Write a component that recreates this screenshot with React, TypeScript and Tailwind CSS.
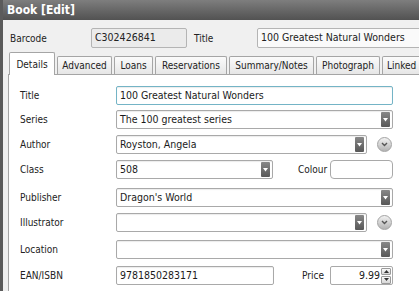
import type { ReactNode } from "react"

const FONT = "font-['DejaVu_Sans_Condensed','DejaVu_Sans',sans-serif]"

function DropBtn() {
  return (
    <div className="ml-auto mr-[2px] flex h-[15px] w-[9px] shrink-0 items-center justify-center rounded-[1px] bg-gradient-to-b from-[#888] to-[#585858]">
      <svg width="5" height="5" viewBox="0 0 5 5">
        <path d="M0 1h5L2.5 4.5z" fill="#fff" />
      </svg>
    </div>
  )
}

function RoundBtn() {
  return (
    <div className="ml-[10px] flex h-[15px] w-[15px] items-center justify-center rounded-full border border-[#a3a3a3] bg-gradient-to-b from-[#f2f2f2] to-[#b3b3b3]">
      <svg width="7" height="5" viewBox="0 0 7 5">
        <path d="M1 1l2.5 2.5L6 1" stroke="#555" strokeWidth="1.4" fill="none" />
      </svg>
    </div>
  )
}

function Box({ w, value, drop, focus }: { w: string; value?: string; drop?: boolean; focus?: boolean }) {
  return (
    <div
      className={`flex h-[19px] items-center rounded-[2px] border bg-white pl-[3px] text-[#1b1b1b] shadow-[inset_0_1px_1px_rgba(0,0,0,0.08)] ${w} ${
        focus ? "border-[#74b4c6]" : "border-[#a9a9a9]"
      }`}
    >
      <span className="whitespace-nowrap text-[10.5px]">{value}</span>
      {drop && <DropBtn />}
    </div>
  )
}

function Row({ label, mt, children }: { label: string; mt: string; children: ReactNode }) {
  return (
    <div className={`flex h-[19px] items-center ${mt}`}>
      <div className="w-[96px] shrink-0 text-[#222]">{label}</div>
      {children}
    </div>
  )
}

const tabs = [
  { name: "Advanced", w: "w-[55px]" },
  { name: "Loans", w: "w-[39px]" },
  { name: "Reservations", w: "w-[72px]" },
  { name: "Summary/Notes", w: "w-[85px]" },
  { name: "Photograph", w: "w-[64px]" },
]

export default function App() {
  return (
    <div className={`${FONT} flex h-[291px] w-[419px] flex-col overflow-hidden border-l-[3px] border-[#5b5b5b] bg-[#f0f0f0] text-[10px]`}>
      {/* title bar */}
      <div className="flex h-[20px] shrink-0 items-center bg-gradient-to-b from-[#7e7e7e] to-[#525252] pl-[4px] text-[12px] font-bold text-white">
        Book [Edit]
      </div>

      {/* barcode / title */}
      <div className="mt-[8px] flex h-[20px] shrink-0 items-center">
        <div className="w-[88px] shrink-0 pl-[7px] text-[#222]">Barcode</div>
        <div className="flex h-[20px] w-[96px] shrink-0 items-center rounded-[2px] border border-[#b4b4b4] bg-[#ebebeb] pl-[3px] text-[10.5px] text-[#222]">
          C302426841
        </div>
        <div className="ml-[7px] w-[63px] shrink-0 text-[#222]">Title</div>
        <div className="flex h-[20px] w-[200px] shrink-0 items-center rounded-[2px] border border-[#b4b4b4] bg-[#fafafa] pl-[3px] text-[10.5px] text-[#222]">
          100 Greatest Natural Wonders
        </div>
      </div>

      {/* tabs */}
      <div className="relative z-10 mt-[4px] flex shrink-0 items-end gap-[2px] pl-[6px]">
        <div className="-mb-px flex h-[23px] w-[46px] shrink-0 items-center justify-center rounded-t-[2px] border border-b-0 border-[#a5a5a5] bg-white text-[#222]">
          Details
        </div>
        {tabs.map((t) => (
          <div
            key={t.name}
            className={`flex h-[18px] shrink-0 items-center justify-center rounded-t-[2px] border border-b-0 border-[#a5a5a5] bg-gradient-to-b from-[#fbfbfb] to-[#e6e6e6] text-[#222] ${t.w}`}
          >
            {t.name}
          </div>
        ))}
        <div className="flex h-[18px] w-[50px] shrink-0 items-center rounded-t-[2px] border border-b-0 border-[#a5a5a5] bg-gradient-to-b from-[#fbfbfb] to-[#e6e6e6] pl-[4px] text-[#222]">
          Linked
        </div>
      </div>

      {/* details panel */}
      <div className="ml-[5px] flex-1 border-l border-t border-[#a5a5a5] bg-white pl-[11px]">
        <Row label="Title" mt="mt-[11px]">
          <Box w="w-[277px]" value="100 Greatest Natural Wonders" focus />
        </Row>
        <Row label="Series" mt="mt-[5px]">
          <Box w="w-[277px]" value="The 100 greatest series" drop />
        </Row>
        <Row label="Author" mt="mt-[6px]">
          <Box w="w-[251px]" value="Royston, Angela" drop />
          <RoundBtn />
        </Row>
        <Row label="Class" mt="mt-[6px]">
          <Box w="w-[157px]" value="508" drop />
          <div className="ml-[25px] w-[32px] text-[#222]">Colour</div>
          <div className="h-[19px] w-[63px] rounded-[4px] border border-[#a9a9a9] bg-white" />
        </Row>
        <Row label="Publisher" mt="mt-[9px]">
          <Box w="w-[277px]" value="Dragon's World" drop />
        </Row>
        <Row label="Illustrator" mt="mt-[6px]">
          <Box w="w-[251px]" drop />
          <RoundBtn />
        </Row>
        <Row label="Location" mt="mt-[8px]">
          <Box w="w-[277px]" drop />
        </Row>
        <Row label="EAN/ISBN" mt="mt-[7px]">
          <Box w="w-[158px]" value="9781850283171" />
          <div className="ml-[28px] w-[28px] text-[#222]">Price</div>
          <div className="flex h-[19px] w-[63px] items-center rounded-[2px] border border-[#a9a9a9] bg-white">
            <span className="ml-auto pr-[1px] text-[10.5px] text-[#1b1b1b]">9.99</span>
            <div className="mr-[1px] flex h-[16px] w-[10px] flex-col gap-px">
              <div className="flex flex-1 items-center justify-center rounded-[1px] border border-[#9a9a9a] bg-gradient-to-b from-[#fafafa] to-[#d6d6d6]">
                <svg width="5" height="3" viewBox="0 0 5 3">
                  <path d="M0 3h5L2.5 0z" fill="#333" />
                </svg>
              </div>
              <div className="flex flex-1 items-center justify-center rounded-[1px] border border-[#9a9a9a] bg-gradient-to-b from-[#fafafa] to-[#d6d6d6]">
                <svg width="5" height="3" viewBox="0 0 5 3">
                  <path d="M0 0h5L2.5 3z" fill="#333" />
                </svg>
              </div>
            </div>
          </div>
        </Row>
      </div>
    </div>
  )
}
